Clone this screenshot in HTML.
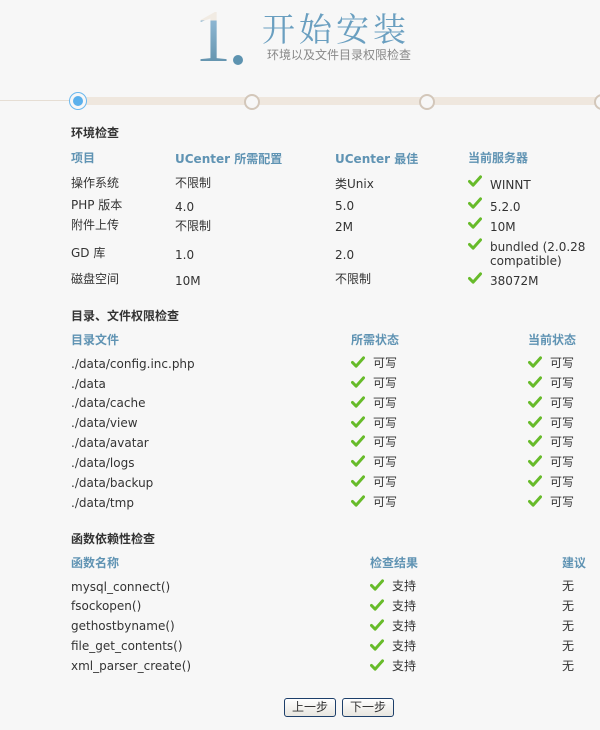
<!DOCTYPE html>
<html><head><meta charset="utf-8"><style>
body{margin:0;width:600px;height:730px;background:#f7f7f7;position:relative;overflow:hidden;font-family:"DejaVu Sans","Noto Sans CJK SC",sans-serif;font-size:12px;color:#333}
.a{position:absolute;white-space:nowrap;line-height:14px}
.t{font-weight:bold;font-size:12px;color:#333;font-family:"Liberation Sans","Noto Sans CJK SC",sans-serif}
.h{font-weight:bold;color:#5f93b3;font-size:12px}
.c{position:absolute;width:14px;height:12px}
.btn{position:absolute;top:698px;height:17px;border:1px solid #1d3f6a;border-radius:3px;background:linear-gradient(#fff,#e8e6e0);font-size:12px;line-height:17px;text-align:center;color:#333;font-family:"Liberation Sans","Noto Sans CJK SC",sans-serif}
</style></head><body>
<svg width="0" height="0" style="position:absolute"><defs><symbol id="k" viewBox="0 0 15 13"><path d="M1.5 7 L5.5 11 L13.5 2" fill="none" stroke="#67bb2a" stroke-width="3.2" stroke-linecap="round" stroke-linejoin="round"/></symbol></defs></svg>
<div class="a" style="left:194px;top:4px;font-family:'Liberation Serif',serif;font-size:74px;line-height:66px;background:linear-gradient(#f1ebe3 0 25%,#8db6d2 25%,#5d8ea8 100%);-webkit-background-clip:text;color:transparent">1</div>
<div style="position:absolute;left:233px;top:55px;width:10px;height:10px;border-radius:50%;background:#5d93b0"></div>
<div class="a" style="left:262px;top:8px;font-size:33px;line-height:40px;color:#6a9fc0;font-family:'Noto Serif CJK SC',serif;letter-spacing:4px">开始安装</div>
<div class="a" style="left:267px;top:48px;font-size:12px;color:#888;font-family:'Liberation Sans','Noto Sans CJK SC',sans-serif">环境以及文件目录权限检查</div>
<div style="position:absolute;left:0;top:100px;width:80px;height:1px;background:#e6ded4"></div>
<div style="position:absolute;left:80px;top:97px;width:520px;height:8px;background:#efe7de"></div>
<div style="position:absolute;left:69px;top:92px;width:16px;height:16px;border-radius:50%;border:1px solid #6bb8ee;background:#f7f7f7"></div>
<div style="position:absolute;left:73px;top:96px;width:10px;height:10px;border-radius:50%;background:#5ab0ec"></div>
<div style="position:absolute;left:244px;top:94px;width:12px;height:12px;border-radius:50%;border:2px solid #d3c7ba;background:#f7f7f7"></div>
<div style="position:absolute;left:419px;top:94px;width:12px;height:12px;border-radius:50%;border:2px solid #d3c7ba;background:#f7f7f7"></div>
<div style="position:absolute;left:594px;top:94px;width:12px;height:12px;border-radius:50%;border:2px solid #d3c7ba;background:#f7f7f7"></div>

<div class="a t" style="left:71px;top:126px">环境检查</div>
<div class="a h" style="left:71px;top:151px">项目</div>
<div class="a h" style="left:175px;top:152px">UCenter 所需配置</div>
<div class="a h" style="left:335px;top:152px">UCenter 最佳</div>
<div class="a h" style="left:468px;top:151px">当前服务器</div>
<div class="a" style="left:71px;top:176px">操作系统</div><div class="a" style="left:175px;top:176px">不限制</div><div class="a" style="left:335px;top:177px">类Unix</div>
<svg class="c" style="left:468px;top:175px"><use href="#k"/></svg><div class="a" style="left:490px;top:178px">WINNT</div>
<div class="a" style="left:71px;top:198px">PHP 版本</div><div class="a" style="left:175px;top:200px">4.0</div><div class="a" style="left:335px;top:199px">5.0</div>
<svg class="c" style="left:468px;top:197px"><use href="#k"/></svg><div class="a" style="left:490px;top:200px">5.2.0</div>
<div class="a" style="left:71px;top:218px">附件上传</div><div class="a" style="left:175px;top:219px">不限制</div><div class="a" style="left:335px;top:220px">2M</div>
<svg class="c" style="left:468px;top:217px"><use href="#k"/></svg><div class="a" style="left:490px;top:220px">10M</div>
<div class="a" style="left:71px;top:246px">GD 库</div><div class="a" style="left:175px;top:248px">1.0</div><div class="a" style="left:335px;top:248px">2.0</div>
<svg class="c" style="left:468px;top:238px"><use href="#k"/></svg><div class="a" style="left:490px;top:240px">bundled (2.0.28</div><div class="a" style="left:490px;top:254px">compatible)</div>
<div class="a" style="left:71px;top:272px">磁盘空间</div><div class="a" style="left:175px;top:274px">10M</div><div class="a" style="left:335px;top:272px">不限制</div>
<svg class="c" style="left:468px;top:272px"><use href="#k"/></svg><div class="a" style="left:490px;top:274px">38072M</div>

<div class="a t" style="left:71px;top:309px">目录、文件权限检查</div>
<div class="a h" style="left:71px;top:333px">目录文件</div><div class="a h" style="left:351px;top:333px">所需状态</div><div class="a h" style="left:528px;top:333px">当前状态</div>

<div class="a" style="left:71px;top:357px">./data/config.inc.php</div><svg class="c" style="left:351px;top:356px"><use href="#k"/></svg><div class="a" style="left:373px;top:356px">可写</div><svg class="c" style="left:528px;top:356px"><use href="#k"/></svg><div class="a" style="left:550px;top:356px">可写</div>
<div class="a" style="left:71px;top:377px">./data</div><svg class="c" style="left:351px;top:376px"><use href="#k"/></svg><div class="a" style="left:373px;top:376px">可写</div><svg class="c" style="left:528px;top:376px"><use href="#k"/></svg><div class="a" style="left:550px;top:376px">可写</div>
<div class="a" style="left:71px;top:396px">./data/cache</div><svg class="c" style="left:351px;top:396px"><use href="#k"/></svg><div class="a" style="left:373px;top:396px">可写</div><svg class="c" style="left:528px;top:396px"><use href="#k"/></svg><div class="a" style="left:550px;top:396px">可写</div>
<div class="a" style="left:71px;top:416px">./data/view</div><svg class="c" style="left:351px;top:416px"><use href="#k"/></svg><div class="a" style="left:373px;top:416px">可写</div><svg class="c" style="left:528px;top:416px"><use href="#k"/></svg><div class="a" style="left:550px;top:416px">可写</div>
<div class="a" style="left:71px;top:436px">./data/avatar</div><svg class="c" style="left:351px;top:435px"><use href="#k"/></svg><div class="a" style="left:373px;top:435px">可写</div><svg class="c" style="left:528px;top:435px"><use href="#k"/></svg><div class="a" style="left:550px;top:435px">可写</div>
<div class="a" style="left:71px;top:456px">./data/logs</div><svg class="c" style="left:351px;top:455px"><use href="#k"/></svg><div class="a" style="left:373px;top:455px">可写</div><svg class="c" style="left:528px;top:455px"><use href="#k"/></svg><div class="a" style="left:550px;top:455px">可写</div>
<div class="a" style="left:71px;top:476px">./data/backup</div><svg class="c" style="left:351px;top:475px"><use href="#k"/></svg><div class="a" style="left:373px;top:475px">可写</div><svg class="c" style="left:528px;top:475px"><use href="#k"/></svg><div class="a" style="left:550px;top:475px">可写</div>
<div class="a" style="left:71px;top:496px">./data/tmp</div><svg class="c" style="left:351px;top:495px"><use href="#k"/></svg><div class="a" style="left:373px;top:495px">可写</div><svg class="c" style="left:528px;top:495px"><use href="#k"/></svg><div class="a" style="left:550px;top:495px">可写</div>

<div class="a t" style="left:71px;top:532px">函数依赖性检查</div>
<div class="a h" style="left:71px;top:556px">函数名称</div><div class="a h" style="left:370px;top:556px">检查结果</div><div class="a h" style="left:562px;top:556px">建议</div>
<div class="a" style="left:71px;top:580px">mysql_connect()</div><svg class="c" style="left:370px;top:579px"><use href="#k"/></svg><div class="a" style="left:392px;top:579px">支持</div><div class="a" style="left:562px;top:579px">无</div>
<div class="a" style="left:71px;top:599px">fsockopen()</div><svg class="c" style="left:370px;top:599px"><use href="#k"/></svg><div class="a" style="left:392px;top:599px">支持</div><div class="a" style="left:562px;top:599px">无</div>
<div class="a" style="left:71px;top:619px">gethostbyname()</div><svg class="c" style="left:370px;top:619px"><use href="#k"/></svg><div class="a" style="left:392px;top:619px">支持</div><div class="a" style="left:562px;top:619px">无</div>
<div class="a" style="left:71px;top:639px">file_get_contents()</div><svg class="c" style="left:370px;top:639px"><use href="#k"/></svg><div class="a" style="left:392px;top:639px">支持</div><div class="a" style="left:562px;top:639px">无</div>
<div class="a" style="left:71px;top:659px">xml_parser_create()</div><svg class="c" style="left:370px;top:659px"><use href="#k"/></svg><div class="a" style="left:392px;top:659px">支持</div><div class="a" style="left:562px;top:659px">无</div>

<div class="btn" style="left:284px;width:50px">上一步</div>
<div class="btn" style="left:342px;width:50px">下一步</div>
</body></html>
